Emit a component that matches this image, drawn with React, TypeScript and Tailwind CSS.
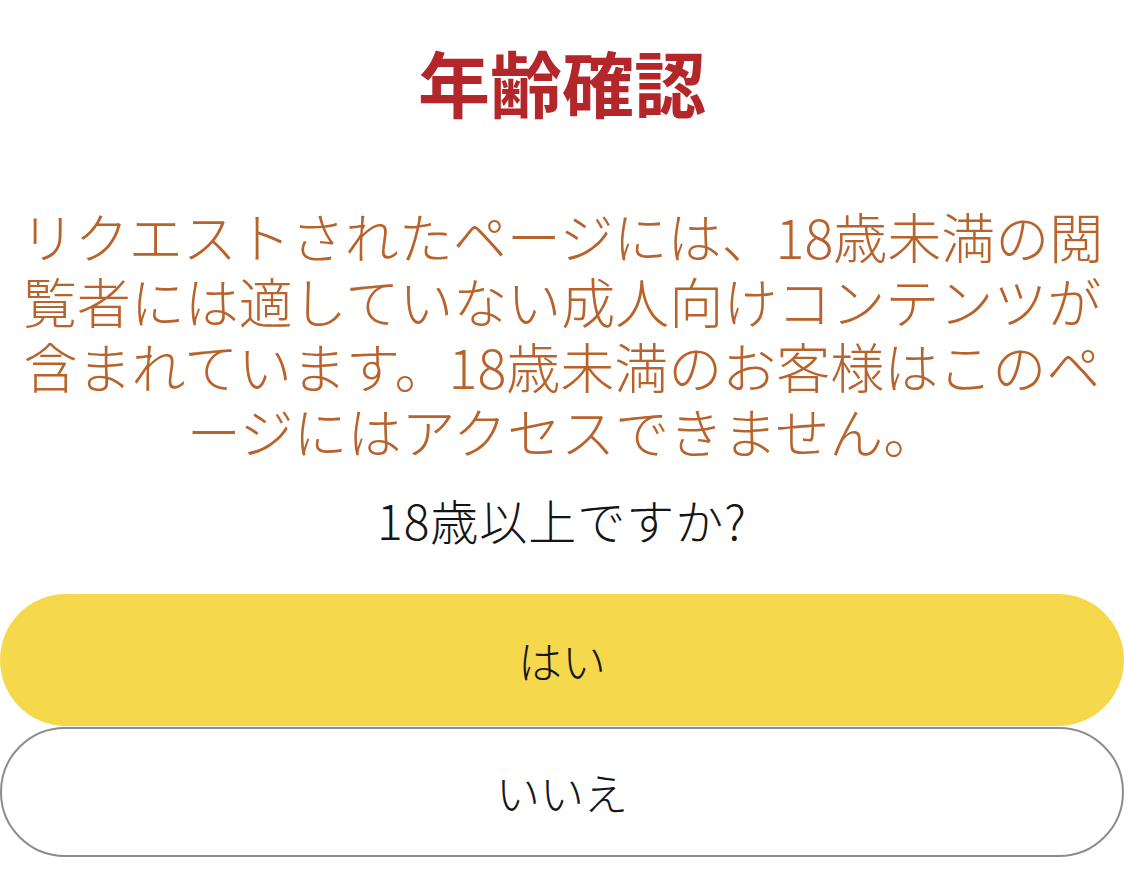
export default function App() {
  return (
    <div
      className="min-h-[883px] bg-white flex flex-col items-center"
      style={{ fontFamily: '"Noto Sans CJK JP", "Noto Sans", sans-serif' }}
    >
      <h1 className="mt-[38px] text-[72px] leading-[86px] font-bold text-[#b3272a]">
        年齢確認
      </h1>
      <p className="mt-[79px] px-3 text-center text-[54px] leading-[65px] font-light text-[#b8632c]">
        リクエストされたページには、18歳未満の閲覧者には適していない成人向けコンテンツが含まれています。18歳未満のお客様はこのページにはアクセスできません。
      </p>
      <p className="mt-[28px] text-[48px] leading-[56px] font-light tracking-[1px] text-[#151515]">
        18歳以上ですか?
      </p>
      <div className="mt-[47px] w-full flex flex-col gap-px">
        <button className="w-full h-[132px] rounded-full bg-[#f6d84c] text-[44px] font-light text-[#151515]">
          はい
        </button>
        <button className="w-full h-[130px] rounded-full border-2 border-[#8c8c8c] bg-white text-[44px] font-light text-[#151515]">
          いいえ
        </button>
      </div>
    </div>
  );
}
